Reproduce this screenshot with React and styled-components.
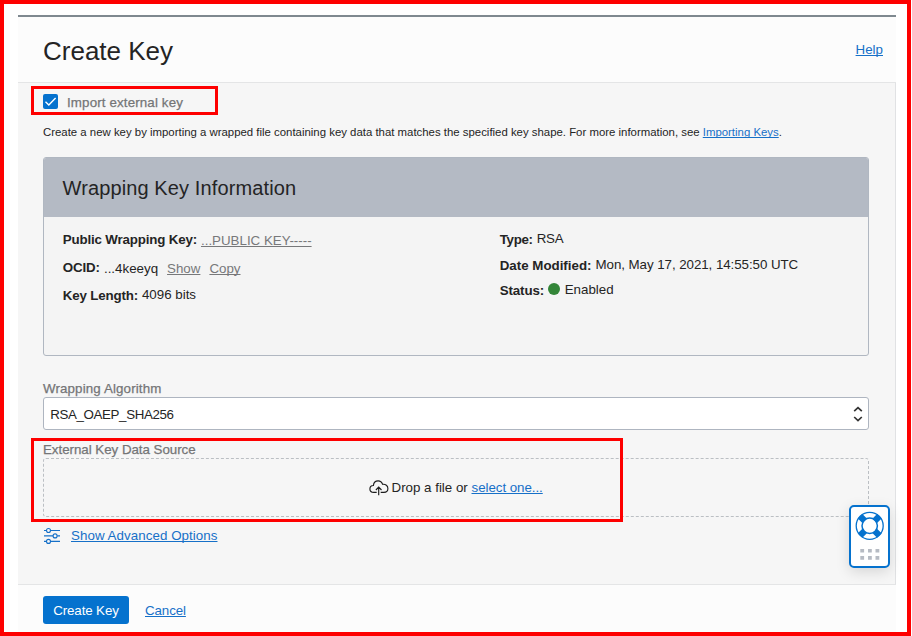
import React from "react";
import styled, { createGlobalStyle } from "styled-components";

const GlobalStyle = createGlobalStyle`
  * { box-sizing: border-box; }
  body { margin: 0; background: #fff; }
`;

const Page = styled.div`
  width: 911px;
  height: 636px;
  padding: 11px 11px 0 14px;
  border: 4px solid #fe0000;
  background: #fff;
  overflow: hidden;
  position: relative;
  font-family: "Liberation Sans", Arial, sans-serif;
  font-size: 13.33px;
  line-height: 17px;
  color: #242424;
`;

const Dialog = styled.main`
  display: flex;
  flex-direction: column;
  height: 617px;
  border-top: 2px solid #7f8990;
  background: #fcfcfc;
`;

const Header = styled.header`
  display: flex;
  justify-content: space-between;
  align-items: flex-start;
  height: 66px;
  padding: 19px 13px 0 25px;
  border-bottom: 1px solid #e4e5e6;
`;

const Title = styled.h1`
  margin: 0;
  font-size: 26px;
  font-weight: 400;
  line-height: 30px;
`;

const Link = styled.a`
  color: ${(p) => (p.$muted ? "#77787a" : "#1670c8")};
  letter-spacing: ${(p) => p.$spacing || "normal"};
  text-decoration: underline;
  text-decoration-thickness: 1px;
  text-decoration-skip-ink: none;
  text-underline-offset: 1px;
  white-space: nowrap;
`;

const HelpSlot = styled.div`
  margin-top: 5px;
`;

const Body = styled.section`
  height: 502px;
  padding: 3px 26px 0 25px;
  border-right: 1px solid #e1e2e4;
  border-bottom: 1px solid #e4e5e6;
  background: #f6f6f6;
`;

const ImportOption = styled.label`
  display: flex;
  align-items: flex-start;
  gap: 9px;
  width: 187px;
  height: 29px;
  margin-left: -12px;
  padding: 5px 9px 0;
  border: 3px solid #fe0000;
`;

const CheckMark = styled.svg`
  display: block;
  flex: none;
  width: 15px;
  height: 15px;
  border-radius: 2px;
  background: #0572ce;
`;

const LabelText = styled.span`
  display: block;
  color: #747577;
  letter-spacing: ${(p) => p.$spacing || "normal"};
  -webkit-text-stroke: 0.25px #747577;
  white-space: nowrap;
`;

const Description = styled.p`
  margin: 9px 0 17px;
  font-size: 11.4px;
  line-height: 16px;
  white-space: nowrap;
`;

const InfoPanel = styled.section`
  height: 199px;
  border: 1px solid #b0b7c1;
  border-radius: 3px;
  background: #f4f4f4;
  overflow: hidden;
`;

const PanelTitle = styled.h2`
  height: 59px;
  margin: 0;
  padding: 18px 18.5px 0;
  background: #b4bac4;
  font-size: 20px;
  font-weight: 400;
  line-height: 24px;
  letter-spacing: 0.12px;
`;

const Details = styled.div`
  display: grid;
  grid-template-columns: 437px 1fr;
  padding: 13px 18px 0 18.7px;
`;

const DetailColumn = styled.div`
  display: flex;
  flex-direction: column;
  gap: ${(p) => p.$gap};
`;

const DetailRow = styled.div`
  display: flex;
  align-items: flex-start;
  height: 18px;
  white-space: nowrap;
`;

const Term = styled.b`
  margin-top: 1px;
  margin-right: 4px;
  letter-spacing: ${(p) => p.$spacing || "normal"};
`;

const Value = styled.span`
  display: flex;
  gap: 9px;
  margin-top: ${(p) => p.$drop || "0"};
  letter-spacing: ${(p) => p.$spacing || "normal"};
`;

const StatusDot = styled.i`
  width: 12px;
  height: 12px;
  margin: 2px -4.3px 0 0;
  border-radius: 50%;
  background: #338538;
`;

const Field = styled.div`
  position: relative;
  margin-top: ${(p) => p.$top};
  padding-top: ${(p) => p.$pad || "0"};
`;

const SelectBox = styled.div`
  display: flex;
  justify-content: space-between;
  height: 33px;
  padding: 8px 5.5px 0 6.3px;
  border: 1px solid #aeb5c0;
  border-radius: 3px;
  background: #fff;
  letter-spacing: -0.38px;
`;

const Chevrons = styled.svg`
  display: block;
  width: 10px;
  height: 16px;
`;

const DropZone = styled.div`
  display: flex;
  height: 59px;
  padding: 20px 0 0 325px;
  border: 1px dashed #bbbfc3;
  border-radius: 3px;
  white-space: pre;
`;

const UploadIcon = styled.svg`
  display: block;
  width: 20px;
  height: 16px;
  margin: 1px 2.5px 0 0;
`;

const Highlight = styled.div`
  position: absolute;
  top: 0;
  left: -12px;
  width: 592px;
  height: 84px;
  border: 3px solid #fe0000;
`;

const AdvancedRow = styled.div`
  display: flex;
  gap: 11px;
  margin-top: 10px;
`;

const SlidersIcon = styled.svg`
  display: block;
  width: 17px;
  height: 17px;
`;

const Footer = styled.footer`
  display: flex;
  align-items: flex-start;
  gap: 16px;
  padding: 11px 25px 0;
`;

const PrimaryButton = styled.button`
  width: 86px;
  height: 28px;
  padding: 0;
  border: 0;
  border-radius: 3px;
  background: #0572ce;
  color: #fff;
  font: inherit;
  letter-spacing: -0.12px;
`;

const CancelSlot = styled.div`
  margin-top: 6px;
`;

const SupportWidget = styled.aside`
  position: absolute;
  left: 845px;
  top: 501px;
  width: 41px;
  height: 63px;
  border: 2px solid #0572ce;
  border-radius: 5px;
  background: #fff;
  box-shadow: 0 4px 14px rgba(0, 0, 0, 0.13);
`;

const SupportArt = styled.svg`
  display: block;
  width: 37px;
  height: 59px;
`;

export default function App() {
  return (
    <>
      <GlobalStyle />
      <Page>
        <Dialog>
          <Header>
            <Title>Create Key</Title>
            <HelpSlot><Link>Help</Link></HelpSlot>
          </Header>
          <Body>
            <ImportOption>
              <CheckMark viewBox="0 0 15 15">
                <path d="M2.5 7.8 L5.8 11 L12.6 4" fill="none" stroke="#fff" strokeWidth="1.4" />
              </CheckMark>
              <LabelText $spacing="0.14px">Import external key</LabelText>
            </ImportOption>
            <Description>
              Create a new key by importing a wrapped file containing key data that matches the
              specified key shape. For more information, see <Link>Importing Keys</Link>.
            </Description>
            <InfoPanel>
              <PanelTitle>Wrapping Key Information</PanelTitle>
              <Details>
                <DetailColumn $gap="10px">
                  <DetailRow>
                    <Term $spacing="-0.16px">Public Wrapping Key:</Term>
                    <Value $drop="2px"><Link $muted>...PUBLIC KEY-----</Link></Value>
                  </DetailRow>
                  <DetailRow>
                    <Term $spacing="-0.1px">OCID:</Term>
                    <Value $drop="2px">
                      <span>...4keeyq</span>
                      <Link $muted>Show</Link>
                      <Link $muted>Copy</Link>
                    </Value>
                  </DetailRow>
                  <DetailRow>
                    <Term $spacing="-0.16px">Key Length:</Term>
                    <Value>4096 bits</Value>
                  </DetailRow>
                </DetailColumn>
                <DetailColumn $gap="7.5px">
                  <DetailRow>
                    <Term $spacing="-0.3px">Type:</Term>
                    <Value $spacing="-0.3px">RSA</Value>
                  </DetailRow>
                  <DetailRow>
                    <Term>Date Modified:</Term>
                    <Value $spacing="-0.06px">Mon, May 17, 2021, 14:55:50 UTC</Value>
                  </DetailRow>
                  <DetailRow>
                    <Term $spacing="-0.12px">Status:</Term>
                    <Value><StatusDot /><span>Enabled</span></Value>
                  </DetailRow>
                </DetailColumn>
              </Details>
            </InfoPanel>
            <Field $top="24px">
              <LabelText $spacing="0.13px">Wrapping Algorithm</LabelText>
              <SelectBox>
                RSA_OAEP_SHA256
                <Chevrons viewBox="0 0 10 16">
                  <path d="M1.2 5.2 L5 1.6 L8.8 5.2 M1.2 11 L5 14.6 L8.8 11" fill="none" stroke="#333" strokeWidth="1.7" />
                </Chevrons>
              </SelectBox>
            </Field>
            <Field $top="8px" $pad="3px">
              <LabelText $spacing="-0.03px">External Key Data Source</LabelText>
              <DropZone>
                <UploadIcon viewBox="0 0 20 16">
                  <path d="M7.7 12.4 H4.8 C2.5 12.4 .9 11.1 .9 9 C.9 7 2.4 5.6 4.4 5.5 C4.7 2.8 6.6 .9 9.1 .9 C11.3 .9 12.9 2.2 13.6 4.3 C16.6 4 18.9 5.7 18.9 8.5 C18.9 10.9 17.2 12.4 14.9 12.4 H11.7 M9.7 15.2 V7.4 M6.9 10 L9.7 7.1 L12.5 10" fill="none" stroke="#1d1d1d" strokeWidth="1.15" />
                </UploadIcon>
                <span>Drop a file or <Link $spacing="-0.05px">select one...</Link></span>
              </DropZone>
              <Highlight />
            </Field>
            <AdvancedRow>
              <SlidersIcon viewBox="0 0 17 17">
                <g fill="none" stroke="#1670c8" strokeWidth="1.1">
                  <path d="M1 3.5 H3.4 M7.6 3.5 H17 M1 8.9 H10 M14.2 8.9 H17 M1 14.4 H3.4 M7.6 14.4 H17" />
                  <circle cx="5.5" cy="3.5" r="2" />
                  <circle cx="12.1" cy="8.9" r="2" />
                  <circle cx="5.5" cy="14.4" r="2" />
                </g>
              </SlidersIcon>
              <Link $spacing="0.06px">Show Advanced Options</Link>
            </AdvancedRow>
          </Body>
          <Footer>
            <PrimaryButton>Create Key</PrimaryButton>
            <CancelSlot><Link $spacing="-0.1px">Cancel</Link></CancelSlot>
          </Footer>
        </Dialog>
        <SupportWidget>
          <SupportArt viewBox="0 0 37 59">
            <g fill="none" stroke="#0572ce">
              <circle cx="18.7" cy="18.8" r="13.5" strokeWidth="1.3" />
              <circle cx="18.7" cy="18.8" r="7.7" strokeWidth="1.5" />
              <path
                d="M13.6 13.7 L9.1 9.2 M23.8 13.7 L28.3 9.2 M13.6 23.9 L9.1 28.4 M23.8 23.9 L28.3 28.4"
                strokeWidth="6.4"
              />
            </g>
            <path
              d="M9.3 42h3.8v3.5h-3.8z M17 42h3.8v3.5h-3.8z M24.5 42h3.8v3.5h-3.8z M9.3 49h3.8v3.8h-3.8z M17 49h3.8v3.8h-3.8z M24.5 49h3.8v3.8h-3.8z"
              fill="#b6bbc3"
            />
          </SupportArt>
        </SupportWidget>
      </Page>
    </>
  );
}
